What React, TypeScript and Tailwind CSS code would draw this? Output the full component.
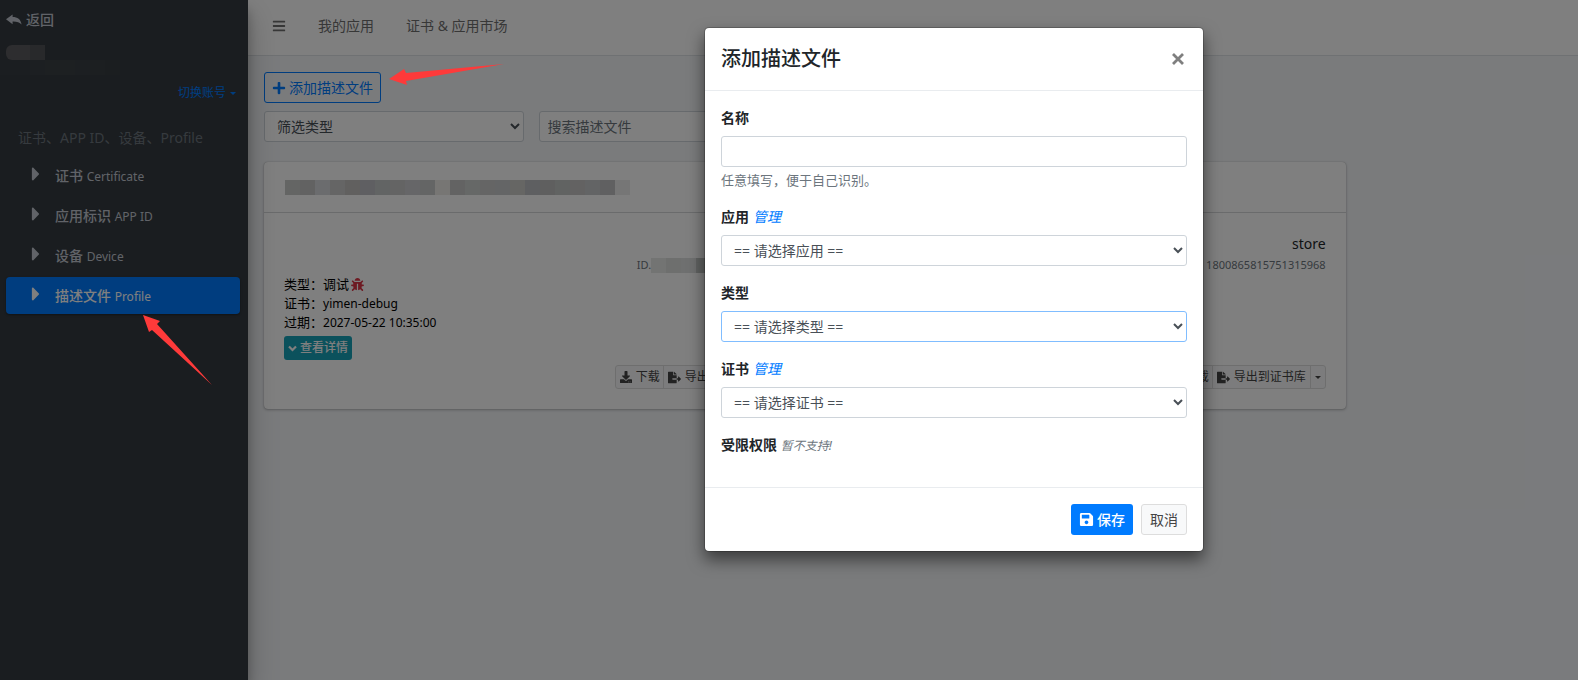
import type { ReactNode } from 'react';
import { FaBars, FaBug, FaCaretRight, FaDownload, FaFileExport, FaPlus, FaSave } from 'react-icons/fa';

const menu = [
  { label: '证书', sub: 'Certificate', active: false },
  { label: '应用标识', sub: 'APP ID', active: false },
  { label: '设备', sub: 'Device', active: false },
  { label: '描述文件', sub: 'Profile', active: true },
];

const inputClass =
  'block h-[31px] w-full rounded-[3px] border bg-white px-2 text-sm text-[#495057] placeholder:text-[#6c757d] outline-none';

function Caret() {
  return <span className="inline-block border-x-[3px] border-t-[3px] border-x-transparent border-t-current" />;
}

function Mosaic({ colors }: { colors: string[] }) {
  return (
    <span className="flex" aria-hidden="true">
      {colors.map((color, i) => (
        <span key={i} className="h-[15px] w-[15px] shrink-0" style={{ backgroundColor: color }} />
      ))}
    </span>
  );
}

function Sidebar() {
  return (
    <aside className="relative z-10 w-[248px] shrink-0 bg-[#343a40] text-sm text-[#c2c7d0] shadow-[0_14px_28px_rgba(0,0,0,0.25),0_10px_10px_rgba(0,0,0,0.22)]">
      <a href="#" className="flex h-10 items-center gap-1 pl-[6px] font-medium">
        <svg width="16" height="12" viewBox="0 0 16 12" fill="currentColor" aria-hidden="true">
          <path d="M0 5.2L6.6 .4V3C11.5 3 14.8 5.2 15.6 10.6C13.6 8.2 10.8 7.4 6.6 7.5V10.2Z" />
        </svg>
        <span>返回</span>
      </a>
      <div className="mt-[5px] ml-[6px] flex w-[39px] justify-end overflow-hidden rounded-l-md">
        <Mosaic colors={['#5a5b5e', '#5a5b5e', '#505256']} />
      </div>
      <Mosaic colors={['#373d42', '#373d42', '#393f44', '#3a4045', '#3a4044', '#393f44', '#383e43', '#363c41']} />
      <div className="mt-2 flex h-5 items-center justify-end pr-3">
        <button type="button" className="flex items-center gap-1 text-xs text-[#007bff]">
          切换账号
          <Caret />
        </button>
      </div>
      <h2 className="mt-6 pl-[18px] leading-[21px] text-[#6c757d]">证书、APP ID、设备、Profile</h2>
      <nav className="mt-[9px] flex flex-col gap-[3px] pr-2 pl-[6px]">
        {menu.map((item) => (
          <a
            key={item.sub}
            href="#"
            className={
              item.active
                ? 'flex h-[37px] items-center rounded bg-[#007bff] text-white shadow-[0_1px_3px_rgba(0,0,0,0.12),0_1px_2px_rgba(0,0,0,0.24)]'
                : 'flex h-[37px] items-center rounded'
            }
          >
            <span className="flex w-[49px] justify-center pb-1 pl-[10px]">
              <FaCaretRight size={22} />
            </span>
            <span className="font-medium">
              {item.label} <span className="text-xs font-normal">{item.sub}</span>
            </span>
          </a>
        ))}
      </nav>
    </aside>
  );
}

function Profile({ title, id }: { title?: string; id: ReactNode }) {
  return (
    <div>
      <div className="flex h-[22px] justify-end text-sm leading-[22px] text-[#212529]">{title}</div>
      <div className="flex h-5 items-center justify-end text-[11px] text-[#6c757d]">{id}</div>
      <div className="text-[13px] leading-[19px] text-black">
        <div className="flex items-center gap-[2px]">
          类型：调试 <FaBug className="text-[#dc3545]" size={13} />
        </div>
        <div>
          证书：<span className="text-xs">yimen-debug</span>
        </div>
        <div>
          过期：<span className="text-xs">2027-05-22 10:35:00</span>
        </div>
      </div>
      <button
        type="button"
        className="mt-1 flex h-6 items-center gap-[3px] rounded-[3px] bg-[#17a2b8] px-1 text-xs font-medium text-white"
      >
        <svg width="9" height="7" viewBox="0 0 9 7" fill="none" stroke="currentColor" strokeWidth="2.2" aria-hidden="true">
          <path d="M1 1.5L4.5 5L8 1.5" />
        </svg>
        查看详情
      </button>
      <div className="mt-[5px] flex justify-end">
        <div className="flex h-6 rounded-[3px] border border-[#ddd] bg-[#f8f9fa] text-xs text-[#444]">
          <button type="button" className="flex w-[48px] items-center gap-1 border-r border-[#ddd] pl-1 whitespace-nowrap">
            <FaDownload size={12} className="shrink-0" />
            下载
          </button>
          <button type="button" className="flex items-center gap-1 border-r border-[#ddd] px-1">
            <FaFileExport size={13} />
            导出到证书库
          </button>
          <button type="button" className="flex items-center px-1" aria-label="更多">
            <Caret />
          </button>
        </div>
      </div>
    </div>
  );
}

function Content() {
  return (
    <div className="min-w-0 flex-1 bg-[#f4f6f9]">
      <header className="flex h-14 items-center gap-8 border-b border-[#dee2e6] bg-white pb-1 pl-6 text-sm text-[#6f6f6f]">
        <button type="button" aria-label="菜单">
          <FaBars size={14} />
        </button>
        <a href="#">我的应用</a>
        <a href="#">证书 &amp; 应用市场</a>
      </header>
      <main className="p-4">
        <button
          type="button"
          className="flex h-[31px] items-center gap-[3px] rounded-[3px] border border-[#007bff] px-[7px] text-sm text-[#007bff]"
        >
          <FaPlus size={14} />
          添加描述文件
        </button>
        <div className="mt-2 flex gap-[15px]">
          <div className="w-1/5">
            <select aria-label="筛选类型" className={`${inputClass} border-[#ced4da]`}>
              <option>筛选类型</option>
            </select>
          </div>
          <div className="w-1/5">
            <input aria-label="搜索描述文件" placeholder="搜索描述文件" className={`${inputClass} border-[#ced4da]`} />
          </div>
        </div>
        <section className="mt-5 w-10/12 rounded bg-white shadow-[0_0_1px_rgba(0,0,0,0.3),0_1px_3px_rgba(0,0,0,0.25)]">
          <div className="flex h-[51px] items-center border-b border-[#d4d6d8] pl-[21px]">
            <Mosaic
              colors={[
                '#c8cbc9', '#c4c4c4', '#d6d8dc', '#cacaca', '#c2c1be', '#bebfc4', '#c5c9c8', '#c8c8c8',
                '#cccdd0', '#c8cbcb', '#eeede9', '#c6c6c6', '#cdd0cf', '#cacaca', '#c8cacd', '#ccccc8',
                '#bdbfc3', '#bebfbe', '#c2c6c4', '#c6c4c4', '#c6c8ca', '#c0c0c2', '#ececec',
              ]}
            />
          </div>
          <div className="grid grid-cols-2 gap-14 p-5">
            <Profile
              id={
                <span className="flex w-[140px] items-center">
                  ID.
                  <Mosaic colors={['#e6e8e7', '#dcdedd', '#dfe1e1', '#c0c4c2', '#c0c4c2']} />
                </span>
              }
            />
            <Profile title="store" id="1800865815751315968" />
          </div>
        </section>
      </main>
    </div>
  );
}

function Field({ id, label, option, manage, focused }: { id: string; label: string; option: string; manage?: boolean; focused?: boolean }) {
  return (
    <div className="mb-4">
      <div className="mb-2 flex gap-1 leading-[21px]">
        <label htmlFor={id} className="font-bold">
          {label}
        </label>
        {manage && (
          <a href="#" className="text-[#007bff] italic">
            管理
          </a>
        )}
      </div>
      <select id={id} className={`${inputClass} ${focused ? 'border-[#80bdff]' : 'border-[#ced4da]'}`}>
        <option>{option}</option>
      </select>
    </div>
  );
}

function AddDialog() {
  return (
    <div
      role="dialog"
      aria-labelledby="dialog-title"
      className="w-[500px] self-start rounded-[5px] border border-black/20 bg-white bg-clip-padding text-sm text-[#212529] shadow-[0_8px_16px_rgba(0,0,0,0.5)]"
    >
      <div className="flex items-center justify-between border-b border-[#e9ecef] p-4">
        <h1 id="dialog-title" className="text-xl leading-[30px] font-medium">
          添加描述文件
        </h1>
        <button type="button" aria-label="关闭" className="pr-[3px] text-[#7f7f7f]">
          <svg width="12" height="12" viewBox="0 0 12 12" stroke="currentColor" strokeWidth="2.8">
            <path d="M1 1l10 10M11 1L1 11" />
          </svg>
        </button>
      </div>
      <form className="p-4">
        <div className="mb-4">
          <label htmlFor="name" className="mb-2 block leading-[21px] font-bold">
            名称
          </label>
          <input id="name" className={`${inputClass} border-[#ced4da]`} />
          <p className="mt-1 text-[13px] leading-[19px] text-[#6c757d]">任意填写，便于自己识别。</p>
        </div>
        <Field id="app" label="应用" option="== 请选择应用 ==" manage />
        <Field id="type" label="类型" option="== 请选择类型 ==" focused />
        <Field id="cert" label="证书" option="== 请选择证书 ==" manage />
        <div className="mb-4 leading-[21px]">
          <span className="font-bold">受限权限</span> <em className="text-xs text-[#6c757d]">暂不支持!</em>
        </div>
      </form>
      <div className="flex justify-end gap-2 border-t border-[#e9ecef] p-4">
        <button type="button" className="flex h-[31px] items-center gap-[3px] rounded-[3px] bg-[#007bff] px-2 font-medium text-white">
          <FaSave size={15} />
          保存
        </button>
        <button type="button" className="h-[31px] rounded-[3px] border border-[#ddd] bg-[#f8f9fa] px-2 text-[#444]">
          取消
        </button>
      </div>
    </div>
  );
}

export default function App() {
  return (
    <div className="relative flex min-h-screen font-['Noto_Sans','Noto_Sans_CJK_SC',sans-serif]">
      <Sidebar />
      <Content />
      <div className="absolute inset-0 z-20 flex justify-center bg-black/50 pt-[27px] pl-[330px]">
        <AddDialog />
      </div>
      {/* pointer arrows */}
      <svg className="pointer-events-none absolute top-0 left-0 z-30" width="520" height="400" fill="#fe3a3a" aria-hidden="true">
        <path d="M389 79L404 69L406 73L504 64L406 81L407 85Z" />
        <path d="M143 315L160 321L157 324L212 385L152 330L149 332Z" />
      </svg>
    </div>
  );
}
